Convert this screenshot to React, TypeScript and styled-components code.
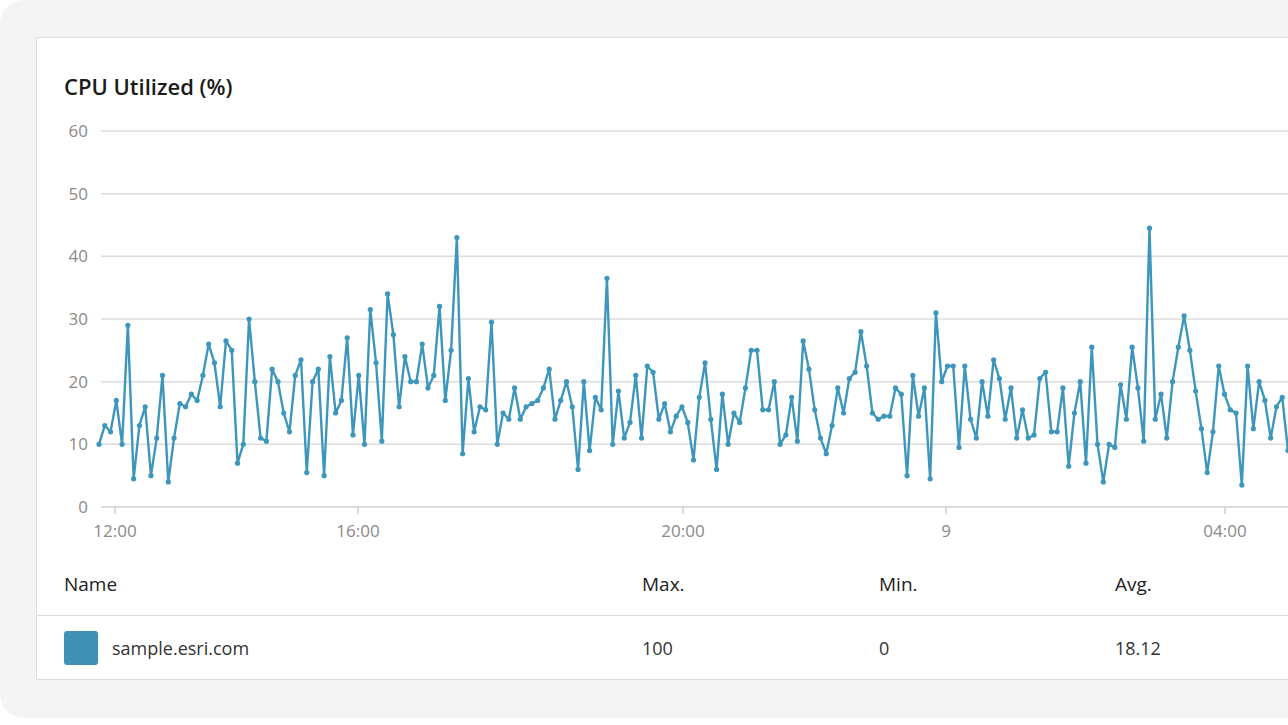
import React from "react";
import styled, { createGlobalStyle } from "styled-components";

const Global = createGlobalStyle`
  html, body { margin: 0; padding: 0; background: #fff; overflow: hidden; }
  body { font-family: "Open Sans", "Noto Sans", sans-serif; }
`;

const Frame = styled.div`
  width: 1320px;
  height: 718px;
  background: #f4f4f4;
  border-radius: 24px;
  padding: 37px 0 0 36px;
  box-sizing: border-box;
`;

const Card = styled.div`
  width: 1300px;
  height: 643px;
  background: #fff;
  border: 1px solid #dcdcdc;
  box-sizing: border-box;
  display: flex;
  flex-direction: column;
`;

const Title = styled.h1`
  margin: 0;
  padding: 33px 0 0 27px;
  height: 67px;
  box-sizing: border-box;
  font-size: 22px;
  line-height: 30px;
  font-weight: 600;
  color: #1a1a1a;
`;

const ChartSvg = styled.svg`
  display: block;
  width: 1263px;
  height: 455px;
`;

const Row = styled.div<{ $header?: boolean }>`
  display: grid;
  grid-template-columns: 578px 237px 236px 1fr;
  align-items: center;
  padding-left: 27px;
  height: ${(p) => (p.$header ? "56px" : "63px")};
  border-bottom: ${(p) => (p.$header ? "1px solid #dcdcdc" : "none")};
  font-size: ${(p) => (p.$header ? "19px" : "18px")};
  color: ${(p) => (p.$header ? "#222" : "#333")};
  padding-bottom: ${(p) => (p.$header ? "8px" : "0")};
  box-sizing: border-box;
`;

const NameCell = styled.div`
  display: flex;
  align-items: center;
  gap: 14px;
`;

const Swatch = styled.span`
  width: 34px;
  height: 34px;
  border-radius: 3px;
  background: #3f91b5;
`;

const vals = [10,13,12,17,10,29,4.5,13,16,5,11,21,4,11,16.5,16,18,17,21,26,23,16,26.5,25,7,10,30,20,11,10.5,22,20,15,12,21,23.5,5.5,20,22,5,24,15,17,27,11.5,21,10,31.5,23,10.5,34,27.5,16,24,20,20,26,19,21,32,17,25,43,8.5,20.5,12,16,15.5,29.5,10,15,14,19,14,16,16.5,17,19,22,14,17,20,16,6,20,9,17.5,15.5,36.5,10,18.5,11,13.5,21,11,22.5,21.5,14,16.5,12,14.5,16,13.5,7.5,17.5,23,14,6,18,10,15,13.5,19,25,25,15.5,15.5,20,10,11.5,17.5,10.5,26.5,22,15.5,11,8.5,13,19,15,20.5,21.5,28,22.5,15,14,14.5,14.5,19,18,5,21,14.5,19,4.5,31,20,22.5,22.5,9.5,22.5,14,11,20,14.5,23.5,20.5,14,19,11,15.5,11,11.5,20.5,21.5,12,12,19,6.5,15,20,7,25.5,10,4,10,9.5,19.5,14,25.5,19,10.5,44.5,14,18,11,20,25.5,30.5,25,18.5,12.5,5.5,12,22.5,18,15.5,15,3.5,22.5,12.5,20,17,11,16,17.5,9];

const X0 = 99, X1 = 1288, Y0 = 507, PER = 376 / 60;
const pts = vals.map((v, i) => [X0 + (i * (X1 - X0)) / (vals.length - 1), Y0 - v * PER]);
const grid = [0, 10, 20, 30, 40, 50, 60];
const ticks: [number, string][] = [[115, "12:00"], [358, "16:00"], [683, "20:00"], [946, "9"], [1225, "04:00"]];

export default function App() {
  return (
    <>
      <Global />
      <Frame>
        <Card>
          <Title>CPU Utilized (%)</Title>
          <ChartSvg viewBox="37 105 1263 455">
            {grid.map((g) => (
              <g key={g}>
                <line x1={101} x2={1300} y1={Y0 - g * PER} y2={Y0 - g * PER} stroke={g === 0 ? "#cfcfcf" : "#dcdcdc"} strokeWidth={1.5} />
                <text x={88} y={Y0 - g * PER + 6} textAnchor="end" fontSize={17} fill="#8a8a8a" fontFamily="'Open Sans', sans-serif">{g}</text>
              </g>
            ))}
            {ticks.map(([x, l]) => (
              <g key={l}>
                <line x1={x} x2={x} y1={Y0} y2={Y0 + 7} stroke="#cfcfcf" strokeWidth={1.5} />
                <text x={x} y={537} textAnchor="middle" fontSize={17} fill="#8a8a8a" fontFamily="'Open Sans', sans-serif">{l}</text>
              </g>
            ))}
            <polyline points={pts.map((p) => p.join(",")).join(" ")} fill="none" stroke="#3d97bc" strokeWidth={2.4} strokeLinejoin="round" />
            {pts.map((p, i) => (
              <circle key={i} cx={p[0]} cy={p[1]} r={2.6} fill="#3d97bc" />
            ))}
          </ChartSvg>
          <Row $header>
            <div>Name</div>
            <div>Max.</div>
            <div>Min.</div>
            <div>Avg.</div>
          </Row>
          <Row>
            <NameCell>
              <Swatch />
              sample.esri.com
            </NameCell>
            <div>100</div>
            <div>0</div>
            <div>18.12</div>
          </Row>
        </Card>
      </Frame>
    </>
  );
}
